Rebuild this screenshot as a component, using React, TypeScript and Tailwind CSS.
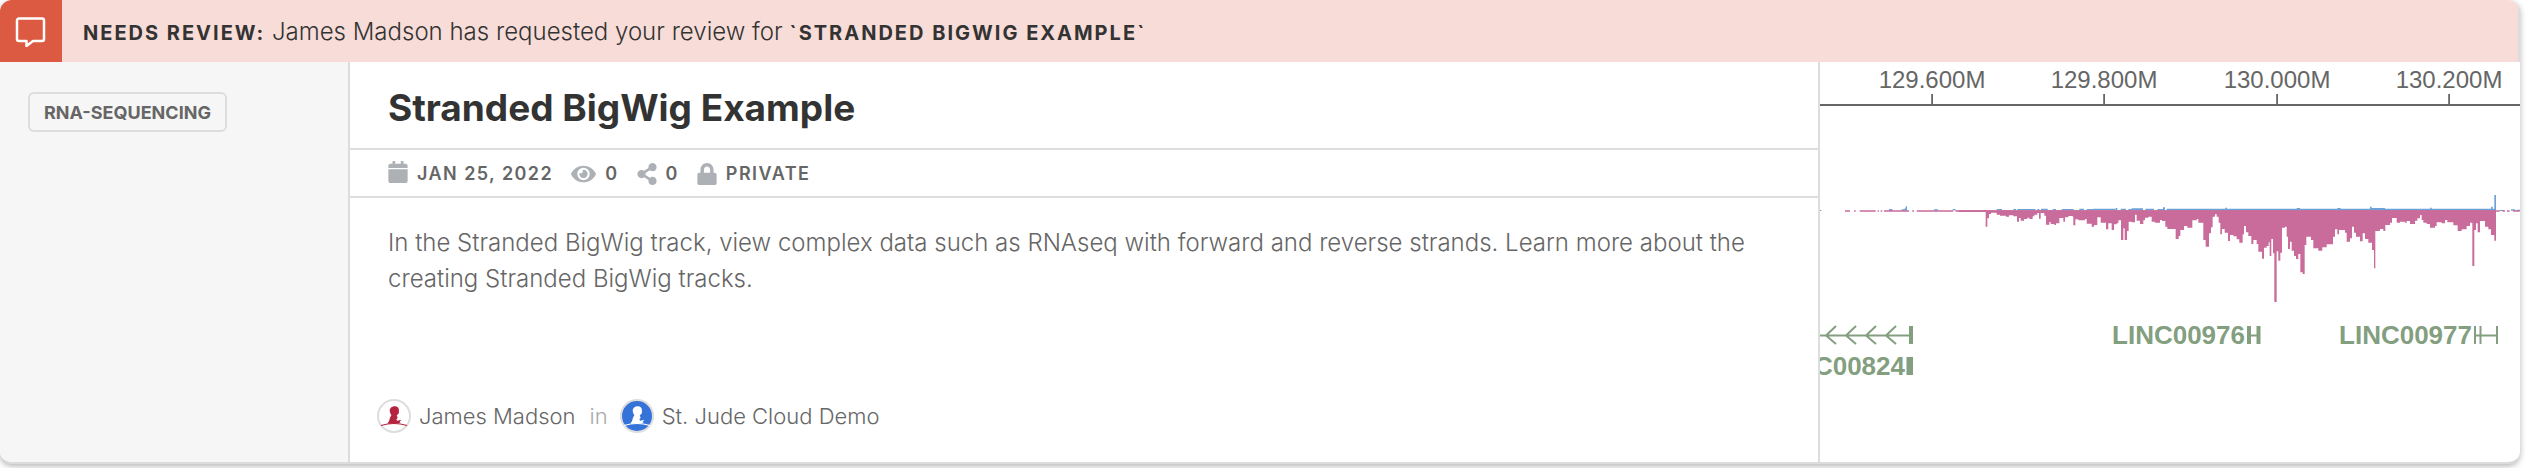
import type { ReactNode } from "react";

type Bar = [x: number, depth: number];

// Reverse-strand coverage: each step ends at x and reaches down to depth.
const reverseStrand: Bar[] = [
  [553, 515], [557, 560], [562, 535], [567, 522], [573, 518], [590, 524], [600, 527], [618, 530], [627, 526], [640, 529],
  [651, 545], [657, 534], [662, 542], [672, 537], [682, 533], [688, 537], [698, 529], [703, 524], [712, 519], [717, 536],
  [722, 519], [733, 527], [738, 554], [748, 546], [752, 552], [763, 555], [768, 550], [778, 534], [790, 545], [795, 532],
  [805, 528], [818, 530], [820, 556], [826, 538], [835, 541], [855, 537], [860, 551], [875, 560], [882, 555], [892, 532],
  [902, 548], [918, 568], [925, 550], [935, 570], [942, 553], [950, 550], [955, 541], [963, 600], [970, 565], [974, 600],
  [981, 573], [986, 545], [995, 547], [1005, 524], [1010, 542], [1020, 552], [1030, 541], [1035, 533], [1045, 530],
  [1055, 545], [1065, 548], [1080, 540], [1086, 543], [1096, 560], [1102, 567], [1127, 597], [1136, 588], [1141, 570],
  [1152, 558], [1162, 563], [1177, 541], [1190, 537], [1195, 548], [1210, 600], [1217, 620], [1227, 580], [1233, 562],
  [1238, 530], [1245, 523], [1250, 530], [1256, 548], [1261, 583], [1266, 567], [1274, 578], [1284, 603], [1290, 585],
  [1300, 589], [1310, 598], [1318, 608], [1328, 583], [1332, 558], [1338, 577], [1345, 588], [1354, 612], [1360, 600],
  [1370, 612], [1375, 635], [1386, 656], [1392, 623], [1400, 618], [1406, 607], [1409, 648], [1414, 597], [1419, 640],
  [1423, 786], [1430, 634], [1435, 662], [1441, 638], [1446, 563], [1455, 560], [1460, 590], [1464, 627], [1470, 605],
  [1475, 632], [1482, 648], [1488, 657], [1495, 642], [1501, 697], [1508, 702], [1514, 615], [1519, 590], [1533, 600],
  [1540, 625], [1555, 632], [1567, 622], [1580, 613], [1595, 613], [1599, 590], [1605, 568], [1612, 583], [1617, 570],
  [1635, 578], [1640, 605], [1650, 595], [1656, 560], [1662, 578], [1668, 590], [1680, 604], [1688, 580], [1695, 597],
  [1705, 608], [1716, 630], [1722, 685], [1726, 573], [1740, 567], [1750, 573], [1756, 555], [1770, 548], [1776, 534],
  [1790, 548], [1800, 545], [1815, 548], [1820, 543], [1830, 552], [1845, 542], [1852, 535], [1860, 525], [1865, 540],
  [1870, 548], [1880, 552], [1890, 563], [1905, 558], [1910, 547], [1925, 550], [1935, 540], [1942, 547], [1960, 556],
  [1973, 573], [1985, 568], [2000, 558], [2010, 548], [2017, 678], [2023, 570], [2028, 550], [2033, 577], [2040, 543],
  [2055, 560], [2065, 568], [2073, 585], [2083, 602], [2088, 515],
];

const reversePath =
  "M553 511" + reverseStrand.map(([x, y], i) => `V${y}H${reverseStrand[i + 1]?.[0] ?? x}`).join("") + "V511Z";

const forwardPath =
  "M60 510h4v3h-4zM267 507h10v6h-10zM305 508h9v-3h3v-6h4v13h-16zM402 508h12v4h-12zM458 507h9v4h-9zM590 507h16v4h-16z" +
  "M640 507h8v4h-8zM652 507h54v4h-54zM712 507h6v4h-6zM723 506h20v5h-20zM758 507h10v4h-10zM785 507h36v4h-36z" +
  "M838 506h14v5h-14zM860 507h20v4h-20zM880 506h66v5h-66zM947 504h5v7h-5zM962 506h16v5h-16zM985 507h10v4h-10z" +
  "M995 505h34v6h-34zM1036 506h26v5h-26zM1072 507h17v4h-17zM1089 502h6v9h-6zM1100 506h988v6h-988zM1276 503h5v5h-5z" +
  "M1490 504h10v4h-10zM1612 504h10v4h-10zM1710 500h5v8h-5zM1715 504h40v4h-40zM1890 503h5v5h-5zM2073 500h5v8h-5z" +
  "M2083 465h5v46h-5zM2099 510h12v3h-12zM2133 508h12v4h-12zM2150 509h10v4h-10z";

const ticks = [
  { x: 112, label: "129.600M" },
  { x: 284, label: "129.800M" },
  { x: 457, label: "130.000M" },
  { x: 629, label: "130.200M" },
];

function GenomePreview() {
  return (
    <svg viewBox="0 0 700 400" role="img" aria-label="Stranded BigWig track preview" className="block h-auto w-full">
      <g fill="#666666" fontFamily="'Liberation Sans', Arial, sans-serif" fontSize="24" textAnchor="middle">
        {ticks.map((t) => (
          <g key={t.label}>
            <text x={t.x} y="26">{t.label}</text>
            <rect x={t.x - 0.8} y="32" width="1.8" height="11" />
          </g>
        ))}
        <rect x="0" y="42" width="700" height="2" />
      </g>
      <g transform="translate(-20 -22) scale(0.33333)">
        <path d={forwardPath} fill="#6ba3d6" />
        <path d={reversePath} fill="#c96b9b" />
        <path
          d="M135 513h15m12 0h5m12 0h48m6 0h4m5 0h5m5 0h75m10 0h5m8 0h110m6 0h90M2087 513h12m8 0h8m6 0h8m10 0h20"
          stroke="#c96b9b"
          strokeWidth="4"
          fill="none"
        />
        <path d="M475 513.500H2088" stroke="#c96b9b" strokeWidth="5" />
      </g>
      <g stroke="#839f80" strokeWidth="2" fill="none">
        <path d="M0 273.500H90M16 264L6 273.500L16 282M36 264L26 273.500L36 282M56 264L46 273.500L56 282M76 264L66 273.500L76 282" />
        <path d="M91 264V282M91 295V313" strokeWidth="4" />
        <path d="M88 295V313" strokeWidth="3" />
        <path d="M429 264V282M438.500 264V282" strokeWidth="4" />
        <path d="M429 273.500H438M655 264V282M660.500 264V282M677 264V282M655 273.500H677" />
      </g>
      <g fill="#839f80" fontFamily="'Liberation Sans', Arial, sans-serif" fontSize="26" fontWeight="700" textAnchor="end">
        <text x="85" y="313">LINC00824</text>
        <text x="425" y="282">LINC00976</text>
        <text x="652" y="282">LINC00977</text>
      </g>
    </svg>
  );
}

function CommentIcon() {
  return (
    <svg viewBox="0 0 32 32" className="size-8" fill="none" stroke="#ffffff" strokeWidth="2.500" strokeLinejoin="round" aria-hidden="true">
      <path d="M4 3.500h23a2 2 0 0 1 2 2V24a2 2 0 0 1-2 2h-9l-6.500 5v-5H4a2 2 0 0 1-2-2V5.500a2 2 0 0 1 2-2z" />
    </svg>
  );
}

function Icon({ box, className, children }: { box: string; className: string; children: ReactNode }) {
  return (
    <svg viewBox={box} className={`${className} fill-[#adb1b5]`} aria-hidden="true">
      {children}
    </svg>
  );
}

function MetaItem({ icon, children }: { icon: ReactNode; children: ReactNode }) {
  return (
    <li className="flex items-center gap-[9px]">
      {icon}
      <span>{children}</span>
    </li>
  );
}

function Silhouette({ color }: { color: string }) {
  return (
    <svg viewBox="0 0 30 30" className="size-full" aria-hidden="true">
      <path
        fill={color}
        d="M10.800 10.500C10.300 7.300 12.800 5.200 15.500 5.200C18.500 5.200 20.300 7.300 19.900 9.800C19.900 11.200 20.200 12.300 19 13.200C18 13.800 17.600 14.400 18 15.200C19 16.300 18.500 17.500 17.300 18.300L18.200 19.800L22.500 18.800L20.800 20.600L21.500 21.300L19.600 22.500L9.500 22.800C8.300 22.400 8.500 21.200 9.800 20.700C10.800 18.500 10.600 16.500 12.200 14.600C12.800 13.900 11.400 13.600 11.400 12.600Z"
      />
      <path d="M2 24.500Q15 20.500 28 24.500" stroke={color} strokeWidth="1.200" fill="none" />
    </svg>
  );
}

export default function App() {
  return (
    <div className="pr-1.5 pb-1 font-['Inter','Liberation_Sans',sans-serif] text-[#666666]">
      <article className="overflow-hidden rounded-xl border-b-2 border-[#dcdcdc] bg-white shadow-[0_2px_6px_rgba(0,0,0,0.3)]">
        <header className="flex h-[62px] items-center border-r-2 border-[#dddddd] bg-[#f7dcd7] text-[#333333]">
          <div className="flex size-[62px] items-center justify-center bg-[#dc5a41]">
            <CommentIcon />
          </div>
          <p className="pt-0.5 pl-[21px] text-2xl leading-8 font-[350]">
            <strong className="text-xl font-bold tracking-widest">NEEDS REVIEW:</strong> James Madson has requested your review for{" "}
            <strong className="text-xl font-bold tracking-widest">`STRANDED BIGWIG EXAMPLE`</strong>
          </p>
        </header>
        <div className="flex">
          <aside className="w-[350px] shrink-0 border-r-2 border-[#dddddd] bg-[#f6f6f6] px-7 py-[30px]">
            <a href="#rna-sequencing" className="inline-flex h-10 items-center rounded-md border-2 border-[#dddddd] px-3.5 pt-0.5 text-lg font-bold">
              RNA-SEQUENCING
            </a>
          </aside>
          <div className="flex min-w-0 flex-1 flex-col">
            <h2 className="border-b-2 border-[#dddddd] px-[38px] pt-6 pb-[18px] text-[37px] leading-[44px] font-bold text-[#333333]">
              Stranded BigWig Example
            </h2>
            <ul className="flex h-12 items-center gap-[18px] border-b-2 border-[#dddddd] px-[38px] pt-0.5 text-lg font-semibold tracking-[0.08em]">
              <MetaItem
                icon={
                  <Icon box="0 0 448 512" className="mb-1 h-[22px] w-5">
                    <path d="M0 464c0 26.500 21.500 48 48 48h352c26.500 0 48-21.500 48-48V192H0v272zM400 64h-48V12c0-6.600-5.400-12-12-12h-40c-6.600 0-12 5.400-12 12v52H160V12c0-6.600-5.400-12-12-12h-40c-6.600 0-12 5.400-12 12v52H48C21.500 64 0 85.500 0 112v48h448v-48c0-26.500-21.500-48-48-48z" />
                  </Icon>
                }
              >
                JAN 25, 2022
              </MetaItem>
              <MetaItem
                icon={
                  <Icon box="0 0 576 512" className="h-[22px] w-[25px]">
                    <path d="M572.520 241.400C518.290 135.590 410.930 64 288 64S57.680 135.640 3.480 241.410a32.350 32.350 0 0 0 0 29.190C57.710 376.410 165.070 448 288 448s230.320-71.640 284.520-177.410a32.350 32.350 0 0 0 0-29.190zM288 400a144 144 0 1 1 144-144 143.930 143.930 0 0 1-144 144zm0-240a95.310 95.310 0 0 0-25.310 3.790 47.850 47.850 0 0 1-66.900 66.900A95.780 95.780 0 1 0 288 160z" />
                  </Icon>
                }
              >
                0
              </MetaItem>
              <MetaItem
                icon={
                  <Icon box="0 0 448 512" className="h-[22px] w-5">
                    <path d="M352 320c-22.608 0-43.387 7.819-59.790 20.895l-102.486-64.054a96.551 96.551 0 0 0 0-41.683l102.486-64.054C308.613 184.181 329.392 192 352 192c53.019 0 96-42.981 96-96S405.019 0 352 0s-96 42.981-96 96c0 7.158.790 14.130 2.276 20.841L155.790 180.895C139.387 167.819 118.608 160 96 160c-53.019 0-96 42.981-96 96s42.981 96 96 96c22.608 0 43.387-7.819 59.790-20.895l102.486 64.054A96.301 96.301 0 0 0 256 416c0 53.019 42.981 96 96 96s96-42.981 96-96-42.981-96-96-96z" />
                  </Icon>
                }
              >
                0
              </MetaItem>
              <MetaItem
                icon={
                  <Icon box="0 0 448 512" className="h-[22px] w-5">
                    <path d="M400 224h-24v-72C376 68.200 307.800 0 224 0S72 68.200 72 152v72H48c-26.500 0-48 21.500-48 48v192c0 26.500 21.500 48 48 48h352c26.500 0 48-21.500 48-48V272c0-26.500-21.500-48-48-48zm-104 0H152v-72c0-39.700 32.300-72 72-72s72 32.300 72 72v72z" />
                  </Icon>
                }
              >
                PRIVATE
              </MetaItem>
            </ul>
            <p className="px-[38px] pt-[27px] text-2xl leading-9 font-[350]">
              In the Stranded BigWig track, view complex data such as RNAseq with forward and reverse strands. Learn more about the
              creating Stranded BigWig tracks.
            </p>
            <footer className="mt-auto flex items-center gap-2 px-[27px] pb-7 text-[22px] leading-9 font-[350]">
              <span className="size-[34px] rounded-full border-2 border-[#dddddd] bg-white">
                <Silhouette color="#b5243f" />
              </span>
              <a href="#james-madson">James Madson</a>
              <span className="pr-1 pl-1.5 text-[#aaaaaa]">in</span>
              <span className="size-[34px] rounded-full border-2 border-[#dddddd] bg-[#3673d9]">
                <Silhouette color="#ffffff" />
              </span>
              <a href="#st-jude-cloud-demo">St. Jude Cloud Demo</a>
            </footer>
          </div>
          <div className="w-[702px] shrink-0 border-l-2 border-[#dddddd]">
            <GenomePreview />
          </div>
        </div>
      </article>
    </div>
  );
}
